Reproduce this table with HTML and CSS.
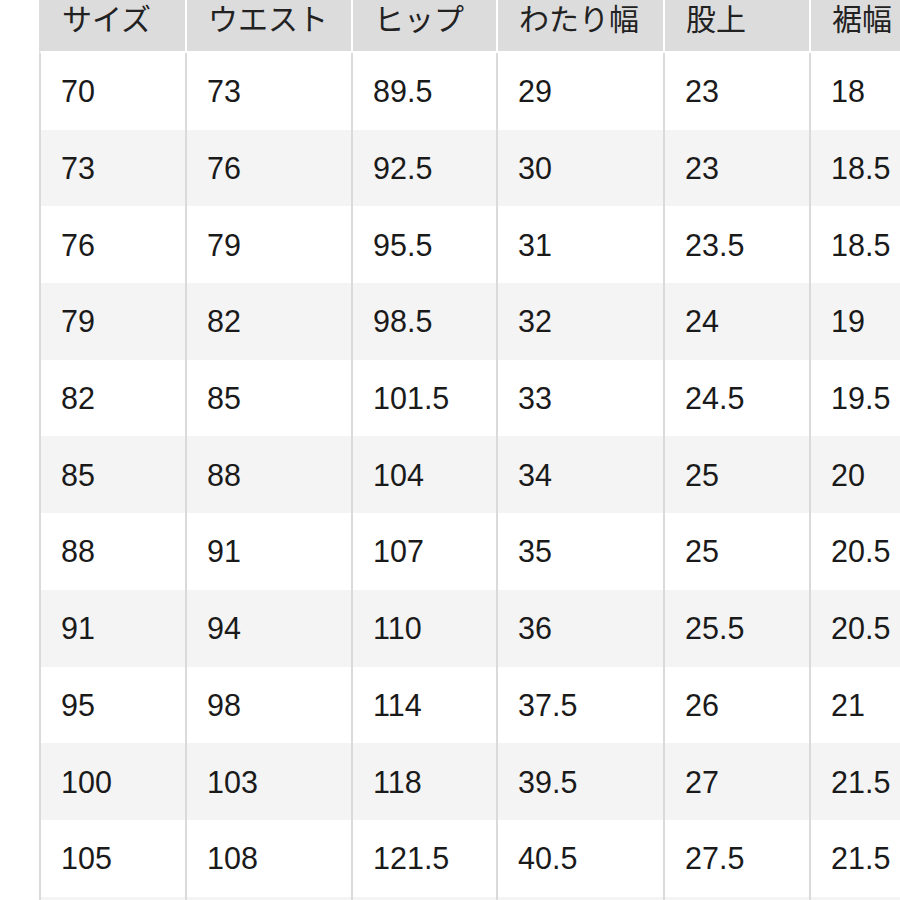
FILE: index.html
```html
<!DOCTYPE html>
<html lang="ja">
<head>
<meta charset="utf-8">
<title>サイズ表</title>
<link rel="stylesheet" href="styles.css">
</head>
<body>
<table class="size-table">
  <colgroup>
    <col class="c1"><col class="c2"><col class="c3"><col class="c4"><col class="c5"><col class="c6">
  </colgroup>
  <thead>
    <tr><th>サイズ</th><th>ウエスト</th><th>ヒップ</th><th>わたり幅</th><th>股上</th><th>裾幅</th></tr>
  </thead>
  <tbody>
    <tr><td>70</td><td>73</td><td>89.5</td><td>29</td><td>23</td><td>18</td></tr>
    <tr><td>73</td><td>76</td><td>92.5</td><td>30</td><td>23</td><td>18.5</td></tr>
    <tr><td>76</td><td>79</td><td>95.5</td><td>31</td><td>23.5</td><td>18.5</td></tr>
    <tr><td>79</td><td>82</td><td>98.5</td><td>32</td><td>24</td><td>19</td></tr>
    <tr><td>82</td><td>85</td><td>101.5</td><td>33</td><td>24.5</td><td>19.5</td></tr>
    <tr><td>85</td><td>88</td><td>104</td><td>34</td><td>25</td><td>20</td></tr>
    <tr><td>88</td><td>91</td><td>107</td><td>35</td><td>25</td><td>20.5</td></tr>
    <tr><td>91</td><td>94</td><td>110</td><td>36</td><td>25.5</td><td>20.5</td></tr>
    <tr><td>95</td><td>98</td><td>114</td><td>37.5</td><td>26</td><td>21</td></tr>
    <tr><td>100</td><td>103</td><td>118</td><td>39.5</td><td>27</td><td>21.5</td></tr>
    <tr><td>105</td><td>108</td><td>121.5</td><td>40.5</td><td>27.5</td><td>21.5</td></tr>
    <tr class="tail"><td></td><td></td><td></td><td></td><td></td><td></td></tr>
  </tbody>
</table>
</body>
</html>
```
FILE: styles.css
```css
html, body {
  margin: 0;
  padding: 0;
  background: #ffffff;
  overflow: hidden;
  width: 900px;
  height: 900px;
}

.size-table {
  margin-left: 39px;
  border-collapse: separate;
  border-spacing: 0;
  table-layout: fixed;
  width: 916px;
  font-family: "Liberation Sans", "Noto Sans CJK JP", sans-serif;
  color: #1a1a1a;
}

.c1 { width: 146px; }
.c2 { width: 166px; }
.c3 { width: 145px; }
.c4 { width: 167px; }
.c5 { width: 146px; }
.c6 { width: 146px; }

.size-table th {
  height: 53px;
  box-sizing: border-box;
  padding: 0 0 29px 21px;
  background: #dcdcdc;
  border-left: 2px solid #ffffff;
  border-bottom: 2px solid #ffffff;
  text-align: left;
  vertical-align: bottom;
  font-weight: normal;
  font-family: "Noto Sans CJK JP", sans-serif;
  font-size: 30px;
  line-height: 10px;
  white-space: nowrap;
  color: #222222;
}

.size-table th:first-child {
  border-left-color: #dcdcdc;
}

.size-table td {
  height: 76.7px;
  box-sizing: border-box;
  padding: 0 0 0 20px;
  border-left: 2px solid #dadada;
  font-size: 30.5px;
  line-height: 30px;
  vertical-align: middle;
  white-space: nowrap;
}

.size-table tbody tr:nth-child(even) td {
  background: #f4f4f4;
}
```
